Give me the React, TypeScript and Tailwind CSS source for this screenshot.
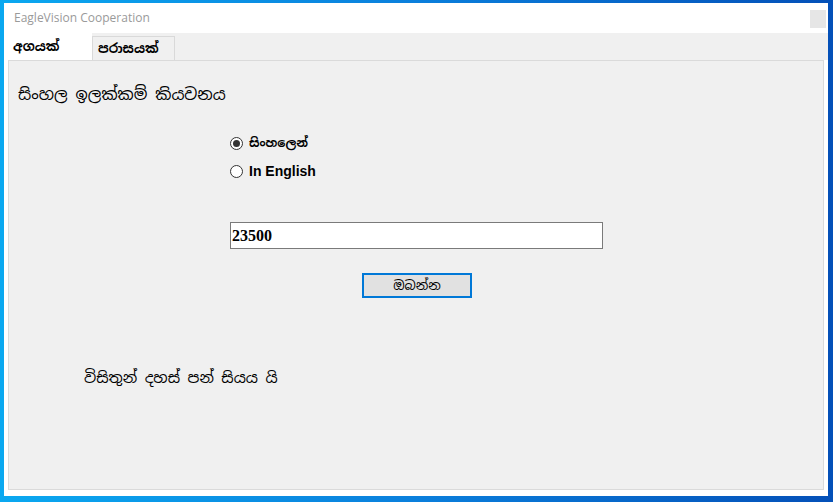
import React from "react";

export default function App() {
  const sin = "font-['Noto_Sans_Sinhala','Noto_Serif_Sinhala','Noto_Sans','Liberation_Sans',sans-serif]";
  return (
    <div className="w-[833px] h-[502px] bg-[linear-gradient(90deg,#0aa8f0_0%,#0a7fdc_50%,#0450b8_100%)] pt-[3px] pl-[4px] pr-[5px] pb-[6px]">
      <div className="flex h-full flex-col bg-white">
        {/* title bar */}
        <div className="flex h-[30px] shrink-0 items-center justify-between pl-[10px] pr-[2px]">
          <span className="font-['Open_Sans','Noto_Sans',sans-serif] text-[12px] text-[#9a9a9a]">EagleVision Cooperation</span>
          <div className="mt-[2px] h-[18px] w-[16px] bg-[#e6e6e6]" />
        </div>
        {/* tab strip */}
        <div className="flex h-[27px] shrink-0 items-end bg-[#f0f0f0]">
          <div className={`flex h-[27px] w-[88px] items-center bg-white pl-[9px] text-[13px] font-bold text-black ${sin}`}>අගයක්</div>
          <div className={`flex h-[24px] w-[83px] items-center border border-b-0 border-[#d9d9d9] bg-[#f0f0f0] pl-[5px] text-[13px] font-bold text-black ${sin}`}>පරාසයක්</div>
        </div>
        {/* body */}
        <div className="flex flex-1 flex-col px-[4px] pb-[6px]">
          <div className="flex flex-1 flex-col border border-[#dadada] bg-[#f0f0f0]">
            <div className={`pl-[9px] pt-[22px] text-[16px] text-black ${sin}`}>සිංහල ඉලක්කම් කියවනය</div>
            <div className="ml-[221px] mt-[27px] flex flex-col gap-[10px]">
              <label className="flex h-[18px] items-center gap-[6px]">
                <span className="flex h-[13px] w-[13px] items-center justify-center rounded-full border border-[#333] bg-white">
                  <span className="h-[7px] w-[7px] rounded-full bg-[#333]" />
                </span>
                <span className={`text-[12px] font-bold text-black ${sin}`}>සිංහලෙන්</span>
              </label>
              <label className="flex h-[18px] items-center gap-[6px]">
                <span className="h-[13px] w-[13px] rounded-full border border-[#333] bg-white" />
                <span className="font-['Liberation_Sans',sans-serif] text-[14px] font-bold text-black">In English</span>
              </label>
            </div>
            <div className="ml-[221px] mt-[42px] flex h-[27px] w-[373px] items-center border border-[#7a7a7a] bg-white pl-[1px] font-['Liberation_Serif',serif] text-[16px] font-bold text-black">
              23500
            </div>
            <div className={`ml-[353px] mt-[24px] flex h-[25px] w-[110px] items-center justify-center border-2 border-[#0078d7] bg-[#e1e1e1] text-[13px] text-black ${sin}`}>
              ඔබන්න
            </div>
            <div className={`ml-[75px] mt-[69px] text-[15px] text-black ${sin}`}>විසිතුන් දහස් පන් සියය යි</div>
          </div>
        </div>
      </div>
    </div>
  );
}
